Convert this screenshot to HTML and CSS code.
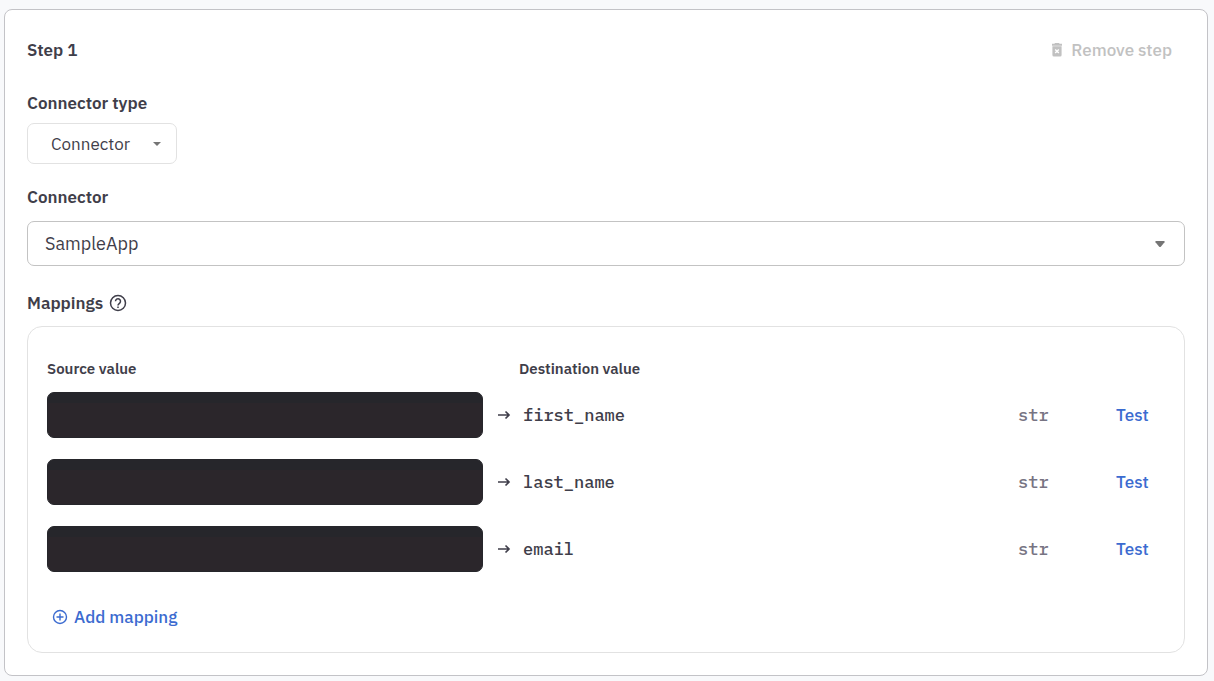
FILE: index.html
```html
<!DOCTYPE html>
<html lang="en">

<head>
  <meta charset="UTF-8">
  <meta name="viewport" content="width=device-width, initial-scale=1.0">
  <title>Connector steps</title>
  <link rel="stylesheet" href="styles.css">
</head>

<body>
  <main class="step">
    <header class="step-header">
      <h2 class="title">Step 1</h2>
      <button class="remove-button" type="button" disabled>
        <svg class="trash-icon" viewBox="0 0 12 14" aria-hidden="true">
          <path fill="currentColor" fill-rule="evenodd" d="M4 0h4l.6.7H11v2H1v-2h2.400zM1.400 3.300h9.200V12q0 1.500-1.500 1.500H2.900q-1.500 0-1.500-1.500zM4.700 6 3.700 7l1.300 1.300-1.300 1.300 1 1L6 9.300l1.300 1.300 1-1L7 8.300 8.300 7l-1-1L6 7.300z" />
        </svg>
        Remove step
      </button>
    </header>

    <div class="field field-type">
      <label class="title" for="connector-type">Connector type</label>
      <div class="select select-small">
        <select id="connector-type">
          <option>Connector</option>
        </select>
        <svg class="arrow" viewBox="0 0 10 6" aria-hidden="true">
          <path fill="currentColor" d="M1 1h8L5 5z" />
        </svg>
      </div>
    </div>

    <div class="field field-connector">
      <label class="title" for="connector">Connector</label>
      <div class="select">
        <select id="connector">
          <option>SampleApp</option>
        </select>
        <svg class="arrow" viewBox="0 0 10 6" aria-hidden="true">
          <path fill="currentColor" d="M1 0h8q1 0 .5 1.200L6 5.500q-1 1-2 0L.5 1.200Q0 0 1 0z" />
        </svg>
      </div>
    </div>

    <section>
      <h2 class="title mappings-title">
        Mappings
        <svg class="help-icon" viewBox="0 0 18 18" fill="none" stroke="currentColor" stroke-width="1.500" aria-hidden="true">
          <circle cx="9" cy="9" r="7.500" />
          <path d="M6.500 7.300a2.500 2.500 0 1 1 4.200 1.800C9.800 9.900 9 10.200 9 11.400M9 12.400v1.700" />
        </svg>
      </h2>

      <div class="mappings">
        <table class="mappings-table">
          <colgroup>
            <col class="col-source">
            <col>
            <col class="col-type">
            <col class="col-test">
          </colgroup>
          <thead>
            <tr>
              <th scope="col">Source value</th>
              <th scope="col" class="destination-title">Destination value</th>
              <td></td>
              <td></td>
            </tr>
          </thead>
          <tbody>
            <tr>
              <td><input class="source" type="text" aria-label="Source value for first_name"></td>
              <td>
                <div class="destination">
                  <svg class="arrow-right" viewBox="0 0 14 10" aria-hidden="true">
                    <path d="M1 5h11M8.500 1.500 12 5 8.500 8.500" />
                  </svg>
                  <code>first_name</code>
                </div>
              </td>
              <td class="type">str</td>
              <td><button class="link-button" type="button">Test</button></td>
            </tr>
            <tr>
              <td><input class="source" type="text" aria-label="Source value for last_name"></td>
              <td>
                <div class="destination">
                  <svg class="arrow-right" viewBox="0 0 14 10" aria-hidden="true">
                    <path d="M1 5h11M8.500 1.500 12 5 8.500 8.500" />
                  </svg>
                  <code>last_name</code>
                </div>
              </td>
              <td class="type">str</td>
              <td><button class="link-button" type="button">Test</button></td>
            </tr>
            <tr>
              <td><input class="source" type="text" aria-label="Source value for email"></td>
              <td>
                <div class="destination">
                  <svg class="arrow-right" viewBox="0 0 14 10" aria-hidden="true">
                    <path d="M1 5h11M8.500 1.500 12 5 8.500 8.500" />
                  </svg>
                  <code>email</code>
                </div>
              </td>
              <td class="type">str</td>
              <td><button class="link-button" type="button">Test</button></td>
            </tr>
          </tbody>
        </table>

        <button class="link-button add-button" type="button">
          <svg class="plus-icon" viewBox="0 0 16 16" fill="none" stroke="currentColor" stroke-width="1.400" aria-hidden="true">
            <circle cx="8" cy="8" r="6.500" />
            <path d="M8 4.500v7M4.500 8h7" />
          </svg>
          Add mapping
        </button>
      </div>
    </section>
  </main>
</body>

</html>
```

FILE: styles.css
```css
*,
*::before,
*::after {
  box-sizing: border-box;
}

body {
  font-family: 'IBM Plex Sans', Roboto, sans-serif;
  font-size: 17px;
  line-height: 24px;
  background: #f8f9fb;
  color: #3f3e4a;
  margin: 0;
  padding: 9px 6px 5px 4px;
}

button,
input,
select {
  font: inherit;
  color: inherit;
}

button {
  background: none;
  border: 0;
  padding: 0;
  cursor: pointer;
}

.step {
  background: #fff;
  border: 1px solid #c3c3c7;
  border-radius: 8px;
  padding: 28px 22px 22px;
}

.title {
  display: block;
  font-size: 17px;
  font-weight: 600;
  margin: 0;
}

.step-header {
  display: flex;
  align-items: center;
  justify-content: space-between;
  margin-bottom: 29px;
  padding-right: 13px;
}

.remove-button {
  display: flex;
  align-items: center;
  gap: 8px;
  color: #c1c1c1;
  font-weight: 500;
  cursor: default;
}

.trash-icon {
  width: 12px;
  height: 14px;
}

.field {
  display: flex;
  flex-direction: column;
}

.field-type {
  gap: 8px;
  margin-bottom: 21px;
}

.field-connector {
  gap: 12px;
  margin-bottom: 25px;
}

/* the select and its arrow share one grid cell */
.select {
  display: grid;
  align-items: center;

  select {
    grid-area: 1 / 1;
    appearance: none;
    background: #fff;
    border: 1px solid #c3c3c3;
    border-radius: 7px;
    font-size: 18px;
    height: 45px;
    padding: 0 40px 0 17px;
    width: 100%;
  }

  .arrow {
    grid-area: 1 / 1;
    justify-self: end;
    color: #757575;
    margin-right: 20px;
    width: 10px;
    height: 6px;
    pointer-events: none;
  }
}

.select-small {
  width: 150px;

  select {
    border-color: #e2e2e2;
    font-size: 17px;
    height: 41px;
    padding: 0 36px 0 23px;
  }

  .arrow {
    margin-right: 15px;
  }
}

.mappings-title {
  display: flex;
  align-items: center;
  gap: 6px;
  margin-bottom: 11px;
}

.help-icon {
  width: 18px;
  height: 18px;
}

.mappings {
  border: 1px solid #e2e2e2;
  border-radius: 15px;
  padding: 32px 19px 23px;
}

.mappings-table {
  border-collapse: collapse;
  table-layout: fixed;
  width: 100%;

  th,
  td {
    padding: 0;
    text-align: left;
  }

  th {
    font-size: 15px;
    font-weight: 600;
    line-height: 20px;
    padding-bottom: 13px;
  }

  tbody td {
    padding-bottom: 21px;
  }

  .destination-title {
    padding-left: 36px;
  }
}

.col-source {
  width: 39%;
}

.col-type {
  width: 98px;
}

.col-test {
  width: 49px;
}

.source {
  display: block;
  width: 100%;
  height: 46px;
  background: linear-gradient(#26262b 10px, #2b262b 10px);
  border: 1px solid #26262b;
  border-radius: 7px;
  color: #fff;
  padding: 0 12px;
}

.destination {
  display: flex;
  align-items: center;
  gap: 12px;
  padding-left: 14px;
}

.arrow-right {
  width: 14px;
  height: 10px;
  fill: none;
  stroke: #3f3e4a;
  stroke-width: 1.6;
}

code,
.type {
  font-family: 'IBM Plex Mono', 'Liberation Mono', monospace;
  font-size: 17px;
  font-weight: 500;
}

.type {
  color: #777483;
}

.link-button {
  color: #3b6bd0;
  font-weight: 500;
}

.add-button {
  display: flex;
  align-items: center;
  gap: 6px;
  margin-top: 12px;
  margin-left: 5px;
}

.plus-icon {
  width: 16px;
  height: 16px;
}
```
